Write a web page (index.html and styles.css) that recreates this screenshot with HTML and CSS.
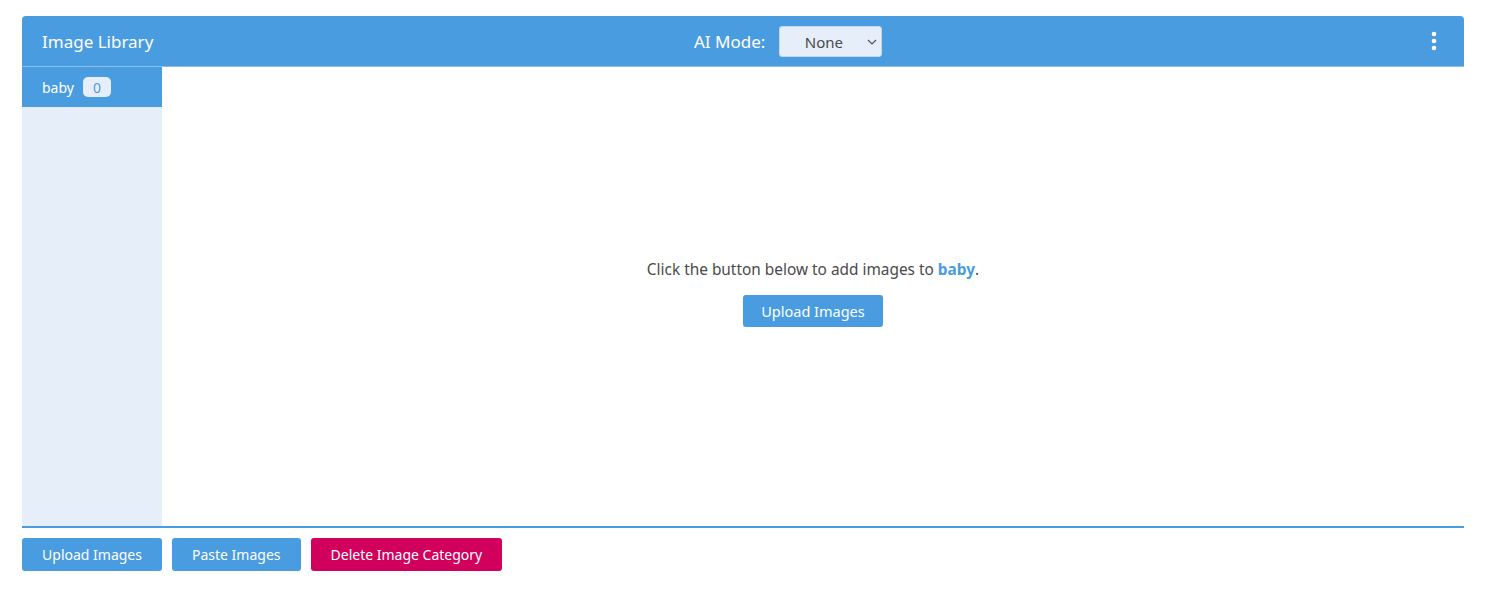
FILE: index.html
```html
<!DOCTYPE html>
<html>
<head>
<meta charset="utf-8">
<link rel="stylesheet" href="styles.css">
</head>
<body>
<div class="lib">
  <header class="bar">
    <div class="title">Image Library</div>
    <div class="mode">
      <span class="mode-label">AI Mode:</span>
      <div class="select"><span>None</span>
        <svg class="chev" width="10" height="6" viewBox="0 0 10 6"><path d="M1 1l4 4 4-4" fill="none" stroke="#555" stroke-width="1.2"/></svg>
      </div>
    </div>
    <div class="menu">
      <svg width="6" height="20" viewBox="0 0 6 20"><circle cx="3" cy="3" r="2.3" fill="#fff"/><circle cx="3" cy="10" r="2.3" fill="#fff"/><circle cx="3" cy="17" r="2.3" fill="#fff"/></svg>
    </div>
  </header>
  <div class="main">
    <aside class="side">
      <div class="cat"><span>baby</span><span class="badge">0</span></div>
    </aside>
    <section class="content">
      <p class="msg">Click the button below to add images to <b>baby</b>.</p>
      <button class="btn">Upload Images</button>
    </section>
  </div>
  <footer class="foot">
    <button class="btn side-w">Upload Images</button>
    <button class="btn">Paste Images</button>
    <button class="btn danger">Delete Image Category</button>
  </footer>
</div>
</body>
</html>
```
FILE: styles.css
```css
* { box-sizing: border-box; }
body { margin: 0; font-family: "Noto Sans", "Open Sans", sans-serif; color: #4a4a4a; background: #fff; }
.lib { margin: 16px 22px 0 22px; }
.bar { height: 51px; background: #4a9ce0; border-radius: 4px 4px 0 0; display: flex; align-items: center; position: relative; border-bottom: 1px solid #8cc0ec; }
.title { color: #fff; font-size: 17px; padding-left: 20px; width: 300px; }
.mode { position: absolute; left: 672px; top: 10px; display: flex; align-items: center; }
.mode-label { color: #fff; font-size: 17px; margin-right: 14px; }
.select { width: 103px; height: 31px; background: #e6eef9; border: 1px solid #c9d6e6; border-radius: 3px; display: flex; align-items: center; justify-content: center; position: relative; font-size: 15px; color: #4a4a4a; }
.select span { margin-right: 14px; }
.chev { position: absolute; right: 4px; top: 12px; }
.menu { margin-left: auto; margin-right: 27px; display: flex; }
.main { display: flex; height: 461px; border-bottom: 2px solid #4a9ce0; }
.side { width: 140px; background: #e6eef9; }
.cat { height: 40px; background: #4a9ce0; color: #fff; font-size: 14px; display: flex; align-items: center; padding-left: 20px; }
.badge { margin-left: 9px; background: #e6eef9; color: #4a9ce0; border-radius: 5px; width: 28px; height: 20px; display: inline-flex; align-items: center; justify-content: center; font-size: 14px; }
.content { flex: 1; display: flex; flex-direction: column; align-items: center; justify-content: center; padding-bottom: 8px; }
.msg { margin: 0 0 15px 0; font-size: 15.4px; }
.msg b { color: #4a9ce0; font-weight: 700; }
.btn { background: #4a9ce0; color: #fff; border: none; border-radius: 3px; height: 33px; padding: 0 20px; font-family: inherit; font-size: 14px; }
.content .btn { width: 140px; height: 32px; padding: 0; font-size: 14.5px; }
.foot { display: flex; gap: 10px; margin-top: 10px; }
.side-w { width: 140px; padding: 0; }
.danger { background: #d1005d; }
```
